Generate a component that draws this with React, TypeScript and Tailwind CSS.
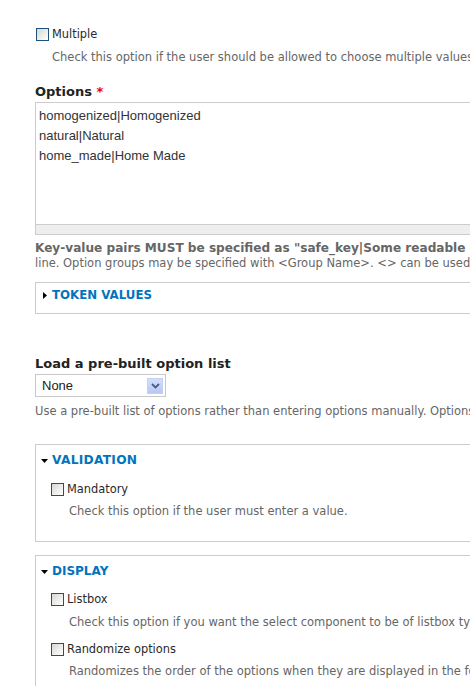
import React from "react";

const font = { fontFamily: '"DejaVu Sans", Verdana, sans-serif' };

function Checkbox() {
  return (
    <span className="inline-block w-[13px] h-[13px] shrink-0 border border-[#1c5180] bg-linear-to-br from-[#d8d8d2] to-white" />
  );
}

function CheckRow({ label, className = "" }: { label: string; className?: string }) {
  return (
    <div className={"flex items-center h-[13px] " + className}>
      <Checkbox />
      <span className="ml-[3px] text-[11.4px] leading-[13px] text-[#2a2a2a]">{label}</span>
    </div>
  );
}

function Desc({ children, className = "" }: { children: React.ReactNode; className?: string }) {
  return (
    <div className={"text-[11.5px] leading-[16px] text-[#666] whitespace-nowrap " + className}>{children}</div>
  );
}

function TriRight() {
  return (
    <svg width="4" height="7" viewBox="0 0 4 7" className="shrink-0">
      <path d="M0 0 L4 3.5 L0 7 Z" fill="#000" />
    </svg>
  );
}

function TriDown() {
  return (
    <svg width="7" height="4" viewBox="0 0 7 4" className="shrink-0">
      <path d="M0 0 L7 0 L3.5 4 Z" fill="#000" />
    </svg>
  );
}

export default function App() {
  return (
    <div className="w-[470px] h-[686px] overflow-hidden bg-white" style={font}>
      <div className="w-[900px] pl-[35px] flex flex-col">
        {/* Multiple */}
        <CheckRow label="Multiple" className="mt-[28px] ml-[1px]" />
        <Desc className="mt-[8px] pl-[17px]">
          Check this option if the user should be allowed to choose multiple values.
        </Desc>

        {/* Options */}
        <div className="mt-[19px] text-[13px] leading-[16px] font-bold text-[#222]">
          Options <span className="text-[#e00]">*</span>
        </div>
        <div className="mt-[2px] h-[133px] w-[800px] border border-[#ccc] flex flex-col">
          <div
            className="flex-1 pt-[3px] pl-[3px] text-[13px] leading-[20px] text-[#333]"
            style={{ fontFamily: '"Liberation Sans", Arial, sans-serif' }}
          >
            <div>homogenized|Homogenized</div>
            <div>natural|Natural</div>
            <div>home_made|Home Made</div>
          </div>
          <div className="h-[10px] border-t border-[#ccc] bg-[#eee]" />
        </div>

        <div className="mt-[6px] text-[11.5px] leading-[15px] text-[#666] whitespace-nowrap">
          <div>
            <span className="font-bold text-[12.1px]">Key-value pairs MUST be specified as "safe_key|Some readable option"</span>. Use of only
            alphanumeric characters and underscores is recommended in keys. One option per
          </div>
          <div>
            line. Option groups may be specified with &lt;Group Name&gt;. &lt;&gt; can be used to insert items at the root
            of the menu after specifying a group.
          </div>
        </div>

        {/* Token values */}
        <div className="mt-[11px] h-[32px] w-[800px] border border-[#ccc] pt-[4px] pl-[7px]">
          <div className="flex items-center gap-[5px] h-[16px]">
            <TriRight />
            <span className="text-[11.8px] leading-[16px] font-bold text-[#0074bd]">TOKEN VALUES</span>
          </div>
        </div>

        {/* Load list */}
        <div className="mt-[42px] text-[13px] leading-[16px] font-bold text-[#222]">Load a pre-built option list</div>
        <div className="mt-[2px] w-[131px] h-[23px] border border-[#c8c8c8] bg-white flex items-center justify-between pl-[6px] pr-[2px]">
          <span
            className="text-[13px] leading-[16px] text-[#222]"
            style={{ fontFamily: '"Liberation Sans", Arial, sans-serif' }}
          >
            None
          </span>
          <span className="w-[16px] h-[16px] bg-linear-to-b from-[#d3defb] to-[#b6c8f4] border border-[#c3d1f4] flex items-center justify-center">
            <svg width="9" height="6" viewBox="0 0 9 6">
              <path d="M1 1 L4.5 4.5 L8 1" stroke="#4b5d80" strokeWidth="1.8" fill="none" />
            </svg>
          </span>
        </div>
        <Desc className="mt-[6px]">
          Use a pre-built list of options rather than entering options manually. Options will not be editable if using
          pre-built list.
        </Desc>

        {/* Validation */}
        <div className="mt-[25px] h-[98px] w-[800px] border border-[#ccc] pt-[7px] pl-[5px]">
          <div className="flex items-center gap-[4px] h-[17px]">
            <TriDown />
            <span className="text-[12.2px] leading-[17px] font-bold text-[#0074bd] tracking-[0.3px]">VALIDATION</span>
          </div>
          <CheckRow label="Mandatory" className="mt-[14px] ml-[10px]" />
          <Desc className="mt-[7px] pl-[28px]">Check this option if the user must enter a value.</Desc>
        </div>

        {/* Display */}
        <div className="mt-[13px] h-[200px] w-[800px] border border-[#ccc] pt-[7px] pl-[5px]">
          <div className="flex items-center gap-[4px] h-[17px]">
            <TriDown />
            <span className="text-[12px] leading-[17px] font-bold text-[#0074bd]">DISPLAY</span>
          </div>
          <CheckRow label="Listbox" className="mt-[13px] ml-[10px]" />
          <Desc className="mt-[8px] pl-[28px]">
            Check this option if you want the select component to be of listbox type instead of radio buttons or
            checkboxes.
          </Desc>
          <CheckRow label="Randomize options" className="mt-[13px] ml-[10px]" />
          <Desc className="mt-[7px] pl-[28px]">
            Randomizes the order of the options when they are displayed in the form.
          </Desc>
        </div>
      </div>
    </div>
  );
}
